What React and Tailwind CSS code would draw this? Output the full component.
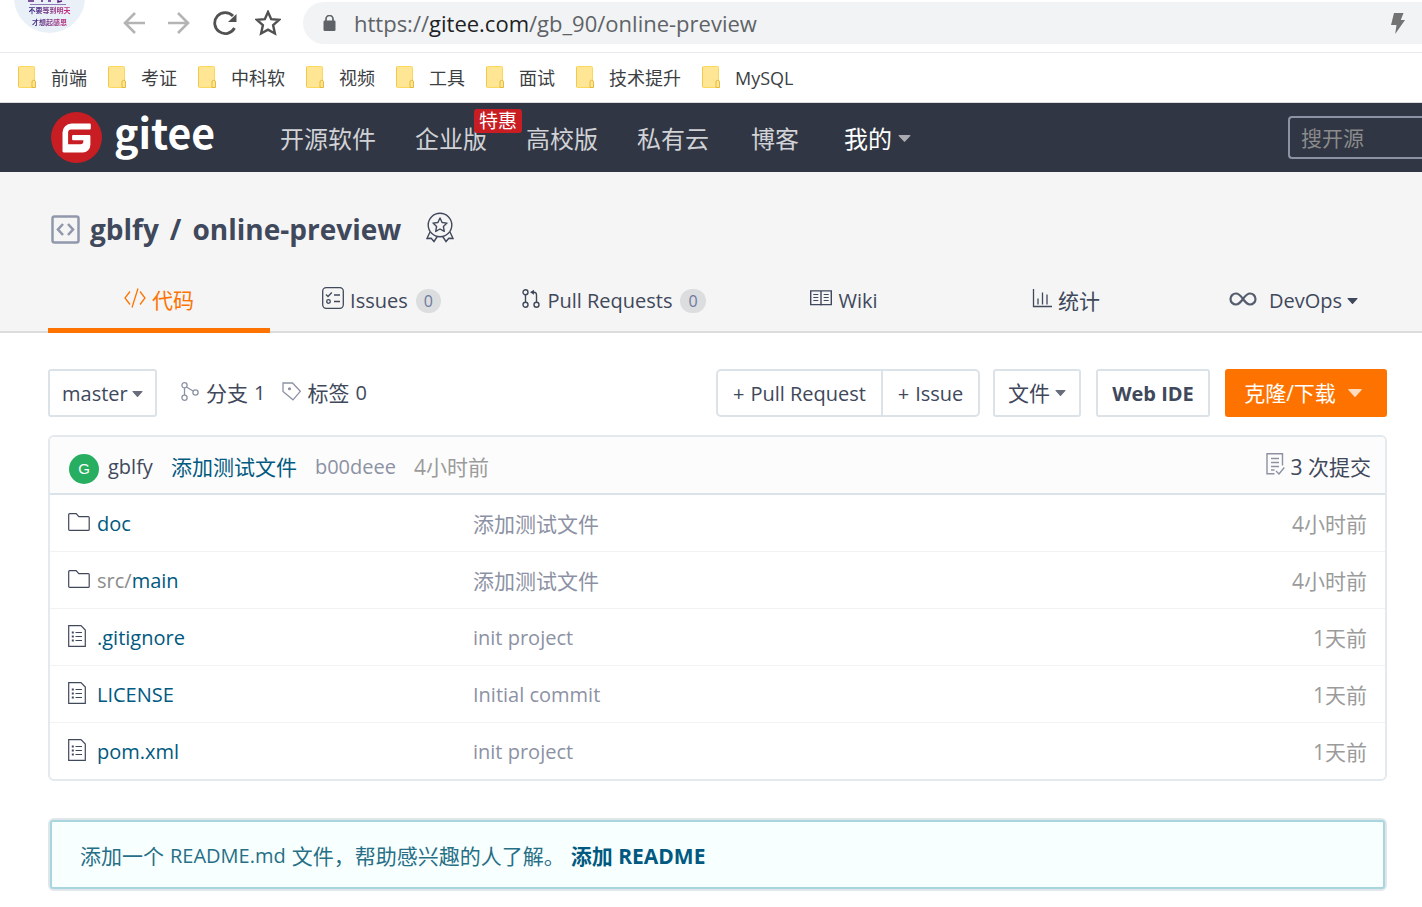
const bookmarks = ["前端", "考证", "中科软", "视频", "工具", "面试", "技术提升", "MySQL"]

const files = [
  { type: "dir", name: "doc", message: "添加测试文件", time: "4小时前" },
  { type: "dir", prefix: "src/", name: "main", message: "添加测试文件", time: "4小时前" },
  { type: "file", name: ".gitignore", message: "init project", time: "1天前" },
  { type: "file", name: "LICENSE", message: "Initial commit", time: "1天前" },
  { type: "file", name: "pom.xml", message: "init project", time: "1天前" },
]

// has at least one CJK character
const isCjk = (s) => /[\u4e00-\u9fff]/.test(s)

function Caret({ className }) {
  return (
    <svg viewBox="0 0 12 7" className={className} fill="currentColor" aria-hidden="true">
      <path d="M0.6 0h10.8c.5 0 .7.5.4.9L6.6 6.6a.8.8 0 0 1-1.2 0L.2.9C-.1.5.1 0 .6 0z" />
    </svg>
  )
}

function BookmarkIcon() {
  return (
    <svg width="18" height="22" viewBox="0 0 18 22" className="mb-[2px]" aria-hidden="true">
      <rect x="0.5" y="0.5" width="16" height="21" rx="1" fill="#ffe694" stroke="#fbd75b" />
      <path d="M.5 1v20" stroke="#f2c94c" />
      <path d="M14 21.500v-5.500a1.500 1.500 0 0 1 3.500 0v5.500z" fill="#ffe694" stroke="#e5b93c" />
    </svg>
  )
}

function FolderIcon() {
  return (
    <svg width="22" height="18" viewBox="0 0 22 18" fill="none" stroke="#40485b" strokeWidth="1.200" aria-hidden="true">
      <path d="M.7 16.400V1.700c0-.6.4-1 1-1h6.500l2.600 2.900h9.400c.6 0 1 .4 1 1v11.800c0 .5-.4.900-1 .9H1.700c-.6 0-1-.4-1-.900z" />
    </svg>
  )
}

function FileIcon() {
  return (
    <svg width="18" height="22" viewBox="0 0 18 22" fill="none" stroke="#40485b" strokeWidth="1.200" aria-hidden="true">
      <path d="M.7.7h12.300l4.300 4.300v16.300H.7z" />
      <path d="M7.500 7.500h6.500M7.500 11.500h6.500M7.500 15.500h6.500" />
      <path d="M3.800 7.500h2M3.800 11.500h2M3.800 15.500h2" strokeWidth="2" />
    </svg>
  )
}

function Avatar() {
  return (
    <div className="mb-[19px] ml-[14px] flex h-[71px] w-[71px] flex-none flex-col items-center self-end overflow-hidden rounded-full bg-[#eaf0f8] pt-[38px]">
      <svg width="44" height="5" viewBox="0 0 44 5" aria-hidden="true">
        <path d="M0 1h6M14 0v2M20 1h3M30 0v2l4-1" stroke="#5a2080" strokeWidth="1.500" fill="none" />
        <path d="M2 4.500h36" stroke="#8d7bb5" strokeWidth="1" />
      </svg>
      <div className="bg-linear-to-r from-[#2f2a86] to-[#d0257c] bg-clip-text text-center text-[7px] leading-[12px] font-bold whitespace-nowrap text-transparent">
        <div>不要等到明天</div>
        <div>才想起感恩</div>
      </div>
    </div>
  )
}

function BrowserBar() {
  return (
    <div className="flex h-[53px] items-end overflow-hidden border-b border-[#e8eaed] bg-white">
      <Avatar />
      <div className="flex flex-1 items-center self-start pt-[2px]">
        <div className="ml-[38px] flex items-center gap-[23px]">
          <button aria-label="后退" className="text-[#b4b4b4]">
            <svg width="22" height="22" viewBox="0 0 22 22" fill="none" stroke="currentColor" strokeWidth="2.600">
              <path d="M22 11H2M12 1L2 11l10 10" />
            </svg>
          </button>
          <button aria-label="前进" className="text-[#b4b4b4]">
            <svg width="22" height="22" viewBox="0 0 22 22" fill="none" stroke="currentColor" strokeWidth="2.600">
              <path d="M0 11h20M10 1l10 10-10 10" />
            </svg>
          </button>
          <button aria-label="刷新" className="text-[#515151]">
            <svg width="24" height="24" viewBox="0 0 24 24" fill="none" stroke="currentColor" strokeWidth="2.800">
              <path d="M21.500 17A10.500 10.500 0 1 1 20 5" />
              <path d="M23.500 3v8H15z" fill="currentColor" stroke="none" />
            </svg>
          </button>
          <button aria-label="收藏" className="-ml-[5px] text-[#515151]">
            <svg width="26" height="26" viewBox="0 0 26 26" fill="none" stroke="currentColor" strokeWidth="2.400">
              <path d="M13 2l3.200 7.200 7.900.7-6 5.200 1.800 8.400L13 19.600l-6.900 3.900 1.800-8.400-6-5.200 7.900-.7z" />
            </svg>
          </button>
        </div>
        <div className="ml-[22px] flex h-[42px] flex-1 items-center rounded-l-full bg-[#f1f3f4] pr-[17px] pl-[20px]">
          <svg width="13" height="16" viewBox="0 0 13 16" aria-hidden="true">
            <rect x="0.500" y="5.500" width="12" height="10.500" rx="1.200" fill="#5f6368" />
            <path d="M3 6V4a3.500 3.500 0 0 1 7 0v2" fill="none" stroke="#5f6368" strokeWidth="1.700" />
          </svg>
          <p className="ml-[18px] flex-1 text-[22px] leading-[28px] text-[#5f6368]">
            https://<span className="text-[#202124]">gitee.com</span>/gb_90/online-preview
          </p>
          <svg width="14" height="21" viewBox="0 0 14 21" fill="#737373" aria-hidden="true">
            <path d="M3 0h9.500l-2.700 7H14L4.200 21l1.300-9H0z" />
          </svg>
        </div>
      </div>
    </div>
  )
}

function BookmarkBar() {
  return (
    <div className="flex h-[50px] items-center gap-[21px] border-b border-[#dcdcde] bg-white pl-[18px]">
      {bookmarks.map((b) => (
        <a key={b} href="#" className="flex items-center gap-[15px] text-[18px] leading-[24px] text-[#3c4043]">
          <BookmarkIcon />
          {b}
        </a>
      ))}
    </div>
  )
}

function SiteHeader() {
  return (
    <header className="flex h-[69px] items-center bg-[#303643] text-[#d0d2d6]">
      <a href="#" className="ml-[51px] flex w-[229px] flex-none items-center gap-[12px]">
        <svg width="51" height="51" viewBox="0 0 51 51" aria-hidden="true">
          <circle cx="25.500" cy="25.500" r="25.500" fill="#c71d23" />
          <path
            d="M38.600 11.500H20.500a9 9 0 0 0-9 9v18.600c0 .8.500 1.300 1.300 1.300h19a7.600 7.600 0 0 0 7.600-7.600v-8.600c0-.8-.5-1.300-1.300-1.300H22.300c-.7 0-1.200.5-1.200 1.300v2.800c0 .8.500 1.300 1.200 1.300h10v1.200a2.800 2.800 0 0 1-2.800 2.800H17.100V20.500c0-1.600 1.300-2.900 2.900-2.900h18.600c.8 0 1.200-.5 1.200-1.300v-3.500c0-.8-.4-1.300-1.200-1.300z"
            fill="#fff"
          />
        </svg>
        <span className="pb-[14px] font-['Noto_Sans_CJK_SC',sans-serif] text-[41px] leading-[48px] font-bold text-white">gitee</span>
      </a>
      <nav className="flex flex-1 items-center gap-[39px] pt-[2px] text-[24px] leading-[36px] whitespace-nowrap">
        <a href="#">开源软件</a>
        <a href="#" className="relative">
          企业版
          <span className="absolute -top-[12px] left-[59px] rounded-[3px] bg-[#c71d23] px-[5px] text-[19px] leading-[24px] text-white">
            特惠
          </span>
        </a>
        <a href="#">高校版</a>
        <a href="#">私有云</a>
        <a href="#" className="px-[3px]">博客</a>
        <button className="flex items-center gap-[6px] px-[3px] text-white">
          我的
          <Caret className="h-[7px] w-[13px] text-[#a9abb1]" />
        </button>
      </nav>
      <input
        type="text"
        aria-label="搜开源"
        placeholder="搜开源"
        className="h-[43px] w-[134px] flex-none rounded-l-[4px] border-2 border-r-0 border-[#8c92a4] bg-transparent pl-[11px] text-[21px] text-white placeholder:text-[#8b8b8c]"
      />
    </header>
  )
}

function Count({ children }) {
  return (
    <span className="ml-[8px] rounded-full bg-[#dcdddf] px-[8px] text-[16px] leading-[24px] font-medium text-[#6b7aa0]">
      {children}
    </span>
  )
}

function RepoHeader() {
  return (
    <section className="border-b-2 border-[#dcdcdc] bg-[#f5f5f5] pr-[35px] pl-[48px] text-[#40485b]">
      <h1 className="flex h-[96px] items-center px-[3px] pt-[18px] text-[28px] leading-[40px] font-bold">
        <svg width="29" height="29" viewBox="0 0 29 29" fill="none" stroke="#9198ab" aria-hidden="true">
          <rect x="1.500" y="1.500" width="26" height="26" rx="2" strokeWidth="2.500" />
          <path d="M12 9l-5 5.500 5 5.500M17 9l5 5.500-5 5.500" strokeWidth="2.600" />
        </svg>
        <a href="#" className="ml-[10px]">gblfy</a>
        <span className="mx-[11px]">/</span>
        <a href="#">online-preview</a>
        <svg width="28" height="31" viewBox="0 0 28 31" fill="none" stroke="#40485b" strokeWidth="1.400" className="mb-[4px] ml-[25px]" aria-hidden="true">
          <circle cx="14" cy="13" r="11.800" />
          <path d="M14 6l2.100 4.500 4.900.6-3.600 3.400.9 4.900-4.300-2.400-4.300 2.400.9-4.900L7 11.100l4.900-.6z" strokeLinejoin="round" />
          <path d="M4 20L1 26.500l4.200-.3 2.800 3.300 3.300-5M24 20l3 6.500-4.200-.3-2.800 3.300-3.300-5" />
        </svg>
      </h1>
      <nav className="-mb-[2px] grid h-[65px] grid-cols-[222fr_223fr_242fr_218fr_226fr_208fr] text-[20px] leading-[28px]">
        <a href="#" className="flex items-center justify-center gap-[6px] border-b-[5px] border-[#fe7300] pt-[4px] text-[21px] text-[#fe7300]">
          <svg width="22" height="20" viewBox="0 0 22 20" fill="none" stroke="currentColor" strokeWidth="1.300" className="mb-[4px]" aria-hidden="true">
            <path d="M6 3.500L1 10l5 6.500M16 3.500l5 6.500-5 6.500M14 .5L8 19.500" />
          </svg>
          代码
        </a>
        <a href="#" className="flex items-center justify-center">
          <svg width="22" height="22" viewBox="0 0 22 22" fill="none" stroke="#40485b" strokeWidth="1.300" className="mr-[6px] mb-[5px]" aria-hidden="true">
            <rect x="0.700" y="0.700" width="20.600" height="20.600" rx="3.500" />
            <path d="M4 7.500l2 2 3.800-4M12 8h6M12 14.500h6" />
            <circle cx="6.500" cy="14.500" r="1.800" />
          </svg>
          Issues
          <Count>0</Count>
        </a>
        <a href="#" className="flex items-center justify-center">
          <svg width="18" height="19" viewBox="0 0 18 19" fill="none" stroke="#40485b" strokeWidth="1.400" className="mr-[7px] mb-[5px]" aria-hidden="true">
            <circle cx="3.500" cy="3.300" r="2.500" />
            <circle cx="3.500" cy="15.700" r="2.500" />
            <circle cx="14.500" cy="15.700" r="2.500" />
            <path d="M3.500 6v7M14.500 13V6c0-1.700-.8-2.700-2.500-2.700H9.500" />
            <path d="M12 .8v5L8 3.300z" fill="#40485b" stroke="none" />
          </svg>
          Pull Requests
          <Count>0</Count>
        </a>
        <a href="#" className="flex items-center justify-center gap-[6px]">
          <svg width="22" height="16" viewBox="0 0 22 16" fill="none" stroke="#40485b" strokeWidth="1.400" className="mb-[5px]" aria-hidden="true">
            <path d="M.7.900h20.600v13.700H.7zM11 .9v14.500" />
            <path d="M3.300 4.500h5M3.300 7.500h5M3.300 10.500h5M13.700 4.500h5M13.700 7.500h5M13.700 10.500h5" strokeWidth="1.200" />
          </svg>
          Wiki
        </a>
        <a href="#" className="flex items-center justify-center gap-[6px] text-[21px]">
          <svg width="20" height="19" viewBox="0 0 20 19" fill="none" stroke="#40485b" strokeWidth="1.300" className="mb-[5px]" aria-hidden="true">
            <path d="M1.500 0v17.500H20M6 9.500v6M10.500 3.500v12M15 5.500v10" />
          </svg>
          统计
        </a>
        <button className="flex items-center justify-end pr-[29px]">
          <svg width="28" height="14" viewBox="0 0 28 14" fill="none" stroke="#555c6d" strokeWidth="2.200" className="mr-[12px] mb-[3px]" aria-hidden="true">
            <path d="M14 7C11.500 3.500 9.800 1.500 7 1.500a5.500 5.500 0 0 0 0 11c2.800 0 4.500-2 7-5.500s4.200-5.500 7-5.500a5.500 5.500 0 0 1 0 11c-2.800 0-4.500-2-7-5.500z" />
          </svg>
          DevOps
          <Caret className="ml-[5px] h-[6px] w-[11px]" />
        </button>
      </nav>
    </section>
  )
}

function Toolbar() {
  return (
    <div className="flex h-[48px] items-center text-[20px] leading-[28px] whitespace-nowrap text-[#40485b]">
      <div className="relative">
        <select
          aria-label="分支"
          defaultValue="master"
          className="h-[48px] w-[109px] appearance-none rounded-[3px] border-2 border-[#dce3e8] bg-white pt-[2px] pl-[12px]"
        >
          <option value="master">master</option>
        </select>
        <Caret className="pointer-events-none absolute top-[22px] right-[14px] h-[6px] w-[11px] text-[#696d7b]" />
      </div>
      <a href="#" className="ml-[24px] flex items-center">
        <svg width="18" height="19" viewBox="0 0 18 19" fill="none" stroke="#8c92a4" strokeWidth="1.300" className="mr-[7px] mb-[3px]" aria-hidden="true">
          <circle cx="3.500" cy="3.300" r="2.600" />
          <circle cx="3.500" cy="15.700" r="2.600" />
          <circle cx="14.500" cy="10.500" r="2.600" />
          <path d="M3.500 6v7M5.500 5l6.500 4" />
        </svg>
        <span className="text-[21px]">分支</span>
        <span className="ml-[6px]">1</span>
      </a>
      <a href="#" className="ml-[17px] flex items-center">
        <svg width="19" height="19" viewBox="0 0 19 19" fill="none" stroke="#8c92a4" strokeWidth="1.300" className="mr-[6px] mb-[3px]" aria-hidden="true">
          <path d="M1 1h9.500l7.800 8.300-7.300 8.500L1 9.500z" />
          <circle cx="7.500" cy="6.800" r="0.900" fill="#8c92a4" />
        </svg>
        <span className="text-[21px]">标签</span>
        <span className="ml-[6px]">0</span>
      </a>

      <div className="ml-auto flex h-[48px] rounded-[5px] border-2 border-[#dce3e8]">
        <button className="flex w-[165px] items-center justify-center gap-[6px] border-r-2 border-[#dce3e8] pt-[2px]">
          <span>+</span> Pull Request
        </button>
        <button className="flex w-[95px] items-center justify-center gap-[6px] pt-[2px]">
          <span>+</span> Issue
        </button>
      </div>
      <button className="ml-[13px] flex h-[48px] w-[88px] items-center justify-center gap-[5px] rounded-[3px] border-2 border-[#dce3e8] text-[21px]">
        文件
        <Caret className="h-[6px] w-[11px] text-[#696d7b]" />
      </button>
      <button className="ml-[15px] h-[48px] w-[114px] rounded-[3px] border-2 border-[#dce3e8] pt-[2px] font-bold">Web IDE</button>
      <button className="ml-[15px] flex h-[48px] w-[162px] items-center justify-center gap-[12px] rounded-[3px] bg-[#fe7300] pr-[6px] text-[21px] text-white">
        克隆/下载
        <Caret className="h-[8px] w-[14px] text-[#ffdcbf]" />
      </button>
    </div>
  )
}

function FilePanel() {
  return (
    <div className="mt-[18px] overflow-hidden rounded-[6px] border-2 border-[#e3e9ed] text-[20px] leading-[28px]">
      <div className="flex h-[58px] items-center border-b-2 border-[#dce3e8] bg-[#fcfcfc] pt-[3px] pr-[14px] pl-[19px] whitespace-nowrap">
        <span className="mt-[4px] flex h-[30px] w-[30px] items-center justify-center rounded-full bg-[#27ae60] font-['Liberation_Sans',sans-serif] text-[15px] text-white">
          G
        </span>
        <a href="#" className="ml-[9px] text-[#40485b]">gblfy</a>
        <a href="#" className="ml-[18px] text-[21px] text-[#005980]">添加测试文件</a>
        <a href="#" className="ml-[18px] text-[#8c92a4]">b00deee</a>
        <span className="ml-[18px] text-[21px] text-[#9b9b9b]">4小时前</span>
        <a href="#" className="ml-auto flex items-center gap-[6px] text-[21px] text-[#40485b]">
          <svg width="19" height="22" viewBox="0 0 19 22" fill="none" stroke="#8c92a4" strokeWidth="1.400" className="mb-[5px]" aria-hidden="true">
            <path d="M16.500 12.500V.8H1v20h7.500" />
            <path d="M5 5.500h8M5 9.500h8M5 13.500h8M5 17h3.500M10 18l3 3 5.300-6.500" />
          </svg>
          3 次提交
        </a>
      </div>
      <table className="w-full table-fixed border-separate border-spacing-0 [&_td]:border-b [&_td]:border-[#f0f2f3] [&_td]:pt-[2px] [&_tr:last-child_td]:border-b-0">
        <tbody>
          {files.map((f) => (
            <tr key={f.name} className="h-[57px] last:h-[56px]">
              <td className="w-[423px] pl-[18px]">
                <a href="#" className="flex items-center text-[#005980]">
                  <span className="mr-[7px] flex w-[22px] pb-[5px]">{f.type === "dir" ? <FolderIcon /> : <FileIcon />}</span>
                  {f.prefix && <span className="text-[#8c8c8c]">{f.prefix}</span>}
                  {f.name}
                </a>
              </td>
              <td className={isCjk(f.message) ? "text-[21px] text-[#8c92a4]" : "text-[#8c92a4]"}>{f.message}</td>
              <td className="w-[160px] pr-[18px] text-right text-[21px] text-[#9b9b9b]">{f.time}</td>
            </tr>
          ))}
        </tbody>
      </table>
    </div>
  )
}

function ReadmeTip() {
  return (
    <div className="mt-[37px] rounded-[6px] border-2 border-[#dfe7ea]">
      <p className="flex h-[69px] items-center rounded-[3px] border-2 border-[#a9d5de] bg-[#f8ffff] px-[28px] pt-[2px] text-[21px] leading-[28px] whitespace-nowrap text-[#276f86]">
        添加一个 <span className="mx-[6px] text-[20px]">README.md</span> 文件，帮助感兴趣的人了解。
        <a href="#" className="ml-[6px] font-bold text-[#005980]">
          添加 README
        </a>
      </p>
    </div>
  )
}

export default function App() {
  return (
    <div className="min-h-screen overflow-x-hidden bg-white font-['Open_Sans','Noto_Sans_CJK_SC',sans-serif]">
      <BrowserBar />
      <BookmarkBar />
      <SiteHeader />
      <RepoHeader />
      <main className="pt-[36px] pr-[35px] pb-[16px] pl-[48px]">
        <Toolbar />
        <FilePanel />
        <ReadmeTip />
      </main>
    </div>
  )
}
